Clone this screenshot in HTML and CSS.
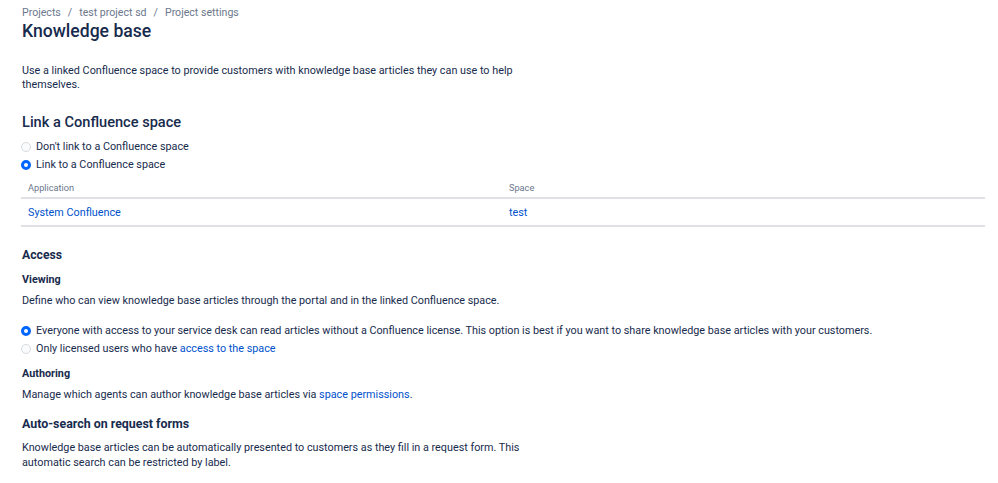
FILE: index.html
```html
<!DOCTYPE html>
<html>
<head>
<meta charset="utf-8">
<link rel="stylesheet" href="styles.css">
</head>
<body>
<div class="page">
  <nav class="crumbs">
    <span>Projects</span><span class="sep">/</span><span>test project sd</span><span class="sep">/</span><span>Project settings</span>
  </nav>
  <h1 class="title">Knowledge base</h1>
  <p class="intro">Use a linked Confluence space to provide customers with knowledge base articles they can use to help themselves.</p>

  <h2 class="h2">Link a Confluence space</h2>
  <div class="radios">
    <label class="radio"><span class="dot"></span>Don't link to a Confluence space</label>
    <label class="radio"><span class="dot on"></span>Link to a Confluence space</label>
  </div>
  <div class="table">
    <div class="row head"><div class="cell">Application</div><div class="cell">Space</div></div>
    <div class="row"><div class="cell link">System Confluence</div><div class="cell link">test</div></div>
  </div>

  <h3 class="h3">Access</h3>
  <h4 class="h4">Viewing</h4>
  <p class="text t1">Define who can view knowledge base articles through the portal and in the linked Confluence space.</p>
  <div class="radios r2">
    <label class="radio"><span class="dot on"></span>Everyone with access to your service desk can read articles without a Confluence license. This option is best if you want to share knowledge base articles with your customers.</label>
    <label class="radio"><span class="dot"></span>Only licensed users who have&nbsp;<a class="a">access to the space</a></label>
  </div>
  <h4 class="h4 auth">Authoring</h4>
  <p class="text t2">Manage which agents can author knowledge base articles via <a class="a">space permissions</a>.</p>
  <h3 class="h3b">Auto-search on request forms</h3>
  <p class="text narrow">Knowledge base articles can be automatically presented to customers as they fill in a request form. This automatic search can be restricted by label.</p>
</div>
</body>
</html>
```
FILE: styles.css
```css
* { box-sizing: border-box; }
body { margin: 0; background: #fff; font-family: "Roboto", "Liberation Sans", sans-serif; color: #172B4D; font-size: 10.8px; }
.page { padding: 5px 13px 0 22px; }
.crumbs { color: #6B778C; font-size: 10.6px; line-height: 16px; display: flex; }
.sep { margin: 0 7px; }
.title { margin: 0; font-size: 17.6px; font-weight: 500; line-height: 20px; }
.intro { margin: 23px 0 0; width: 520px; line-height: 14px; }
.h2 { margin: 20px 0 0; font-size: 14.6px; font-weight: 500; line-height: 20px; }
.radios { margin-top: 8px; display: flex; flex-direction: column; gap: 4px; }
.radio { display: flex; align-items: center; line-height: 14px; margin-left: -1px; }
.dot { width: 10px; height: 10px; border-radius: 50%; border: 1.5px solid #D7DBE1; background: #FAFBFC; margin-right: 5px; flex: none; }
.dot.on { border: 3.3px solid #0065FF; background: #fff; }
.table { margin-top: 10px; width: 964px; margin-left: -1px; }
.row { display: grid; grid-template-columns: 481px 1fr; border-bottom: 2px solid #DFE1E6; }
.cell { padding: 0 7px; }
.head .cell { color: #6B778C; font-size: 9.2px; line-height: 12px; padding-bottom: 3px; }
.row:not(.head) .cell { line-height: 14px; padding-top: 7px; padding-bottom: 5px; }
.link, .a { color: #0052CC; text-decoration: none; }
.h3 { margin: 20px 0 0; font-size: 12.2px; font-weight: 700; line-height: 16px; }
.h4 { margin: 10px 0 0; font-size: 10.8px; font-weight: 700; line-height: 14px; }
.text { margin: 6px 0 0; line-height: 14px; }
.t1 { margin-top: 7px; }
.r2 { margin-top: 16px; gap: 4px; }
.h4.auth { margin-top: 11px; }
.t2 { margin-top: 7px; }
.h3b { margin: 13px 0 0; font-size: 12.4px; font-weight: 700; line-height: 18px; }
.narrow { width: 520px; margin-top: 6.5px; line-height: 15px; }
```
